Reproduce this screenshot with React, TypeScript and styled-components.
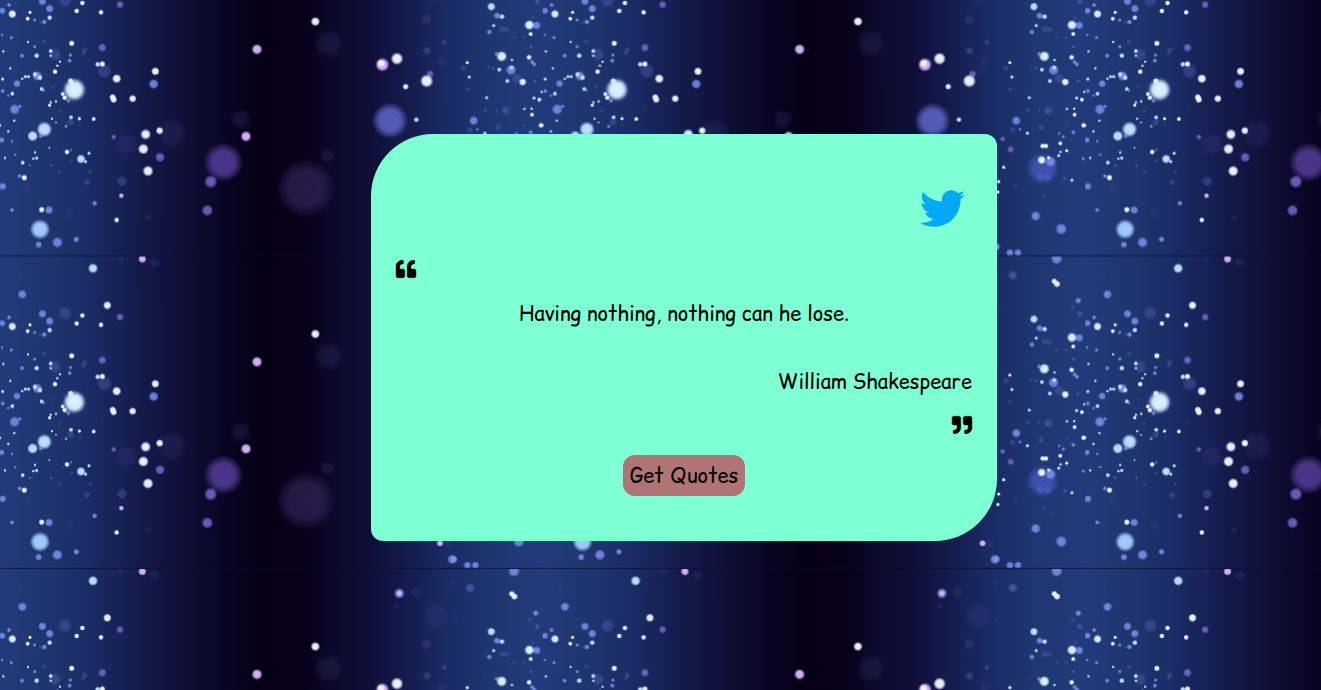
import React from 'react';
import styled, { createGlobalStyle } from 'styled-components';
import { FaQuoteLeft, FaQuoteRight, FaTwitter } from 'react-icons/fa';

const TILE_W = 542.6;
const TILE_H = 312.5;

const tones: Record<string, [string, number]> = {
  w: ['#eef5ff', 1],
  e: ['#dcf3ff', 1],
  c: ['#bfe0ff', 1],
  b: ['#7b96f4', 0.85],
  s: ['#a3ccff', 1],
  p: ['#786ad2', 0.85],
  l: ['#dab2fb', 1],
  m: ['#5560b8', 0.42],
  f: ['#4a4694', 0.2],
  v: ['#4f3890', 0.95],
  u: ['#35265f', 0.68],
  i: ['#5a60be', 0.95],
  k: ['#4a5cc4', 0.72],
};

// Each cluster has an origin inside the tile; its stars are "x,y,radius,tone" in thirds of a pixel.
const clusters: { x: number; y: number; stars: string }[] = [
  {
    x: 0,
    y: 56,
    stars: `515,400,40,f 380,432,30,f 722,358,27,f 670,487,50,v 632,545,17,p 622,631,15,p 771,148,14,l 738,409,14,l
      7,32,9,b 27,15,6,b 37,42,11,e 90,37,5,w 83,56,6,w 104,60,5,b 127,4,11,b 149,26,11,b 149,53,7,c 133,66,7,b 122,67,5,m
      195,2,18,m 247,9,7,w 230,33,7,w 303,37,7,w 360,14,10,p 6,105,4,b 34,113,5,b 84,126,4,c 104,140,5,b 131,125,6,m
      10,154,4,c 66,167,6,b 110,167,7,c 165,163,17,m 152,153,6,c 152,167,4,c 215,130,8,w 211,165,5,b 209,182,6,b 180,185,4,c
      172,197,4,c 254,150,8,m 250,160,6,m 307,143,11,p 31,205,4,c 165,215,7,w 8,237,5,c 67,236,4,c 76,230,5,c 86,230,5,c
      112,228,13,b 105,223,7,c 120,233,7,c 51,251,10,b 125,267,6,c 131,271,4,b 160,261,5,m 8,273,6,b 37,281,6,c 25,287,4,b
      44,328,14,b 60,319,5,b 223,269,36,m 223,269,29,e 212,243,8,e 188,282,6,w 194,293,7,w 205,302,6,b 168,304,4,c 152,307,4,c 149,316,5,w
      313,213,20,m 307,192,8,w 293,193,7,c 350,236,12,w 466,214,11,w 461,252,13,b 338,292,9,w 341,299,9,w 398,296,10,w
      43,362,4,c 25,394,4,c 0,376,4,w 5,420,8,b 36,424,4,b 133,388,20,c 98,408,14,c 122,408,6,b 156,356,4,c 168,367,3,c
      212,367,10,m 213,352,6,c 238,356,5,w 281,357,6,w 198,379,5,b 178,334,5,m 240,373,4,m 307,328,6,f 341,411,7,p
      437,403,15,b 437,403,12,w 479,392,10,w 430,447,14,w 480,472,13,p 444,513,14,w 366,544,14,m 364,587,7,l 284,610,7,b 350,660,7,w
      261,547,9,m 15,474,4,c 46,464,4,b 105,457,4,c 148,443,3,c 68,488,6,c 100,476,4,c 110,474,5,c 90,496,3,b 154,496,3,b
      201,456,7,w 213,450,4,p 243,477,12,c 257,485,5,c 267,460,5,c 214,482,5,m 271,515,5,m 59,528,6,b 73,533,8,w 8,559,10,b
      177,516,5,m 82,564,12,f 36,630,6,b 125,629,8,w 147,630,11,b 120,688,26,s 116,734,9,b 172,727,14,b 229,718,8,b
      210,640,12,f 447,653,9,f 170,455,3,m 190,465,3,m`,
  },
  { x: 0, y: -6.5, stars: '279,55,13,c 427,27,11,l 363,27,9,f 463,38,14,f 55,75,8,f 67,133,12,b 322,166,11,w' },
  { x: 190, y: -6.5, stars: '376,252,12,w 415,318,38,f 347,752,76,u 412,655,20,f' },
  {
    x: 270,
    y: 56,
    stars: `337,194,18,l 333,190,10,w 381,176,16,w 480,222,10,p 470,243,17,w 407,260,8,w 360,362,46,i 439,359,7,c
      470,57,15,f 471,152,11,m 523,127,8,m 515,188,14,f`,
  },
  {
    x: 380,
    y: 56,
    stars: `334,20,11,c 351,47,9,b 366,50,7,c 341,77,5,c 328,96,7,b 366,88,9,m 380,88,8,m 472,5,7,m 470,76,11,b
      448,75,13,e 452,102,6,w 458,53,5,m 365,169,14,e 350,162,6,b 396,180,4,c 358,209,6,c 393,210,14,b 395,203,6,c
      382,243,6,c 410,235,14,m 428,246,10,w 447,172,7,w 456,186,6,b 463,193,6,b 453,140,3,b 403,112,5,m 430,112,5,m
      262,188,5,w 250,205,8,m 268,231,5,c 263,268,6,m 326,200,5,m 340,205,3,b 320,293,5,c 316,330,6,m 350,330,5,m
      378,331,13,m 372,332,6,m 281,362,12,b 433,327,4,c 455,326,4,w 456,344,6,w 462,294,5,c 478,299,6,w 485,276,4,c
      483,376,7,w 433,376,5,m 355,382,9,m 315,399,4,c 292,388,4,b 270,390,8,m 466,244,3,b 280,345,4,f 310,160,4,f`,
  },
  {
    x: 447.4,
    y: 186,
    stars: `158,115,42,k 182,95,14,b 150,140,11,k 172,142,11,k 38,27,7,p 62,58,9,p 112,10,5,c 41,112,5,w 26,155,5,w 24,186,5,w
      78,168,5,m 155,90,11,w 158,48,7,w 168,48,7,w 176,83,5,w 211,40,6,w 212,66,4,c 206,77,5,c 230,62,5,w 208,10,4,b
      220,20,5,b 250,7,6,b 224,145,7,m 246,151,5,c 280,86,5,b 162,198,5,m 188,215,8,f 137,258,13,b 214,297,15,b
      20,350,9,b 60,368,10,b 84,368,10,b`,
  },
  { x: 447.4, y: -126.5, stars: '200,386,15,b 68,436,13,m 193,454,8,w 201,462,9,w 265,512,8,b 269,552,7,m 248,530,6,m' },
  { x: 380, y: 273.5, stars: '180,40,9,l 205,42,12,f 217,88,13,b' },
  { x: 380, y: -39, stars: '58,190,14,b 58,190,8,l 107,186,15,f 168,258,36,f 218,157,9,f 271,173,12,m 225,270,8,f 139,343,13,f 50,228,8,f' },
];

const skyStops: [number, string][] = [
  [0, '#223b7b'],
  [45, '#20356f'],
  [90, '#1b2b65'],
  [130, '#151e50'],
  [165, '#11143f'],
  [195, '#0d0d32'],
  [225, '#090524'],
  [260, '#060016'],
  [305, '#070019'],
  [335, '#0c0a2c'],
  [370, '#0f0e38'],
  [405, '#141b4d'],
  [445, '#1a2a62'],
  [490, '#1f3671'],
  [542.6, '#223b7b'],
];

const GlobalStyle = createGlobalStyle`
  *, *::before, *::after { box-sizing: border-box; }
  body { margin: 0; overflow: hidden; background: #060014; }
`;

const Page = styled.main`
  position: relative;
  display: flex;
  justify-content: flex-start;
  align-items: flex-start;
  width: 100%;
  height: 100vh;
  padding: 134px 0 0 371px;
  font-family: 'Comic Sans MS', 'Comic Relief', 'Comic Neue', cursive;
  font-size: 20px;
  color: #000;
`;

const SkySvg = styled.svg`
  position: absolute;
  inset: 0;
  width: 100%;
  height: 100%;
`;

const Card = styled.section`
  position: relative;
  display: flex;
  flex-direction: column;
  width: 626px;
  height: 407px;
  padding: 52px 25px 45px;
  border-radius: 62px 12px 62px 12px;
  background: #7fffd4;
`;

const TweetLink = styled.a`
  align-self: flex-end;
  height: 45px;
  margin-right: 7.5px;
  color: #03a9f4;
  font-size: 45px;
  line-height: 0;
`;

const Mark = styled.span<{ $end?: boolean }>`
  align-self: ${({ $end }) => ($end ? 'flex-end' : 'flex-start')};
  height: 20px;
  margin-top: ${({ $end }) => ($end ? '18.5px' : '27.5px')};
  line-height: 0;
  font-size: 20px;

  svg {
    overflow: visible;
    stroke: #000;
    stroke-width: 10px;
  }
`;

const Line = styled.p<{ $author?: boolean }>`
  height: 28px;
  margin: ${({ $author }) => ($author ? '40px 0 0' : '21.5px 0 0')};
  line-height: 28px;
  text-align: ${({ $author }) => ($author ? 'right' : 'center')};
  white-space: nowrap;
`;

const QuoteButton = styled.button`
  align-self: center;
  width: 122px;
  height: 41px;
  margin-top: auto;
  padding: 1px 0 0;
  border: 0;
  border-radius: 12px;
  background: #b07474;
  color: #000;
  font: inherit;
  line-height: 40px;
  white-space: nowrap;
`;

const Sky = () => (
  <SkySvg aria-hidden="true">
    <defs>
      <linearGradient id="night" x1="0" x2="1" y1="0" y2="0">
        {skyStops.map(([x, color]) => (
          <stop key={x} offset={x / TILE_W} stopColor={color} />
        ))}
      </linearGradient>
      {Object.entries(tones).map(([name, [color, alpha]]) => (
        <radialGradient key={name} id={`star-${name}`}>
          <stop offset="0" stopColor={color} stopOpacity={alpha} />
          <stop offset="0.58" stopColor={color} stopOpacity={alpha * 0.95} />
          <stop offset="0.8" stopColor={color} stopOpacity={alpha * 0.5} />
          <stop offset="1" stopColor={color} stopOpacity="0" />
        </radialGradient>
      ))}
      <pattern id="tile" width={TILE_W} height={TILE_H} patternUnits="userSpaceOnUse" patternTransform="translate(0 -56)">
        <rect width={TILE_W} height={TILE_H} fill="url(#night)" />
        {clusters.map((cluster, i) => (
          <g key={i} transform={`translate(${cluster.x} ${cluster.y}) scale(${1 / 3})`}>
            {cluster.stars.trim().split(/\s+/).map((star, j) => {
              const [x, y, r, tone] = star.split(',');
              return <circle key={j} cx={x} cy={y} r={Number(r) * 1.18} fill={`url(#star-${tone})`} />;
            })}
          </g>
        ))}
        <rect y={TILE_H - 1.2} width={TILE_W} height="1.2" fill="#080a2c" opacity="0.6" />
      </pattern>
    </defs>
    <rect width="100%" height="100%" fill="url(#tile)" />
  </SkySvg>
);

export default function App() {
  return (
    <>
      <GlobalStyle />
      <Page>
        <Sky />
        <Card>
          <TweetLink aria-label="Tweet this quote">
            <FaTwitter />
          </TweetLink>
          <Mark>
            <FaQuoteLeft />
          </Mark>
          <Line>Having nothing, nothing can he lose.</Line>
          <Line $author>William Shakespeare</Line>
          <Mark $end>
            <FaQuoteRight />
          </Mark>
          <QuoteButton>Get Quotes</QuoteButton>
        </Card>
      </Page>
    </>
  );
}
